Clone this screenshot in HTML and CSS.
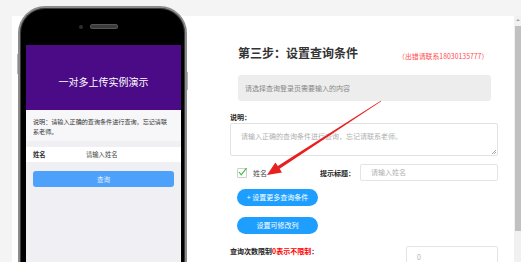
FILE: index.html
```html
<!DOCTYPE html>
<html lang="zh-CN">
<head>
    <meta charset="UTF-8">
    <meta name="viewport" content="width=device-width, initial-scale=1.0">
    <title>设置查询条件</title>
    <link rel="stylesheet" href="styles.css">
</head>
<body>
    <div class="page">
        <div class="panel">
            <div class="phone">
                <div class="phone-top">
                    <span class="camera"></span>
                    <span class="speaker"></span>
                </div>
                <div class="screen">
                    <div class="screen-head">一对多上传实例演示</div>
                    <div class="screen-desc">说明：请输入正确的查询条件进行查询，忘记请联系老师。</div>
                    <div class="screen-row">
                        <span class="screen-label">姓名</span>
                        <span class="screen-ph">请输入姓名</span>
                    </div>
                    <div class="screen-btn">查询</div>
                </div>
            </div>

            <div class="form">
                <div class="title-row">
                    <h2>第三步：设置查询条件</h2>
                    <span class="note">（出错请联系18030135777）</span>
                </div>
                <div class="tip">请选择查询登录页需要输入的内容</div>

                <div class="label">说明：</div>
                <div class="textarea">
                    请输入正确的查询条件进行查询，忘记请联系老师。
                    <span class="grip"></span>
                </div>

                <div class="check-row">
                    <span class="checkbox">
                        <svg width="11" height="10" viewBox="0 0 11 10"><polyline points="2,5 4.2,7.8 9.5,1.2" fill="none" stroke="#3dbb3d" stroke-width="1.1"/></svg>
                    </span>
                    <span class="check-text">姓名</span>
                    <span class="label hint">提示标题：</span>
                    <div class="input">请输入姓名</div>
                </div>

                <button class="btn">+ 设置更多查询条件</button>
                <button class="btn second">设置可修改列</button>

                <div class="limit-row">
                    <span class="label">查询次数限制<em>0表示不限制</em>：</span>
                    <div class="input small">0</div>
                </div>
            </div>
        </div>

        <div class="scrollbar">
            <span class="up"></span>
            <span class="thumb"></span>
        </div>

        <svg class="arrow" width="521" height="262" viewBox="0 0 521 262">
            <polygon fill="#e8201f" points="267,175 282,172.4 279.6,168.7 381.2,101.3 380.8,100.7 277.8,166.1 275.4,162.4"/>
        </svg>
    </div>
</body>
</html>
```

FILE: styles.css
```css
html, body {
    margin: 0;
    height: 262px;
    overflow: hidden;
}
body {
    font-family: "Noto Sans CJK SC", "Liberation Sans", sans-serif;
    background: #f4f4f4;
    color: #333;
}
.page {
    position: relative;
    display: flex;
    padding: 16px 0 0 12px;
    height: 246px;
    overflow: hidden;
}
.panel {
    display: flex;
    width: 491px;
    padding: 0 6px;
    background: #fff;
}

/* phone mockup */
.phone {
    position: relative;
    width: 155px;
    height: 270px;
    margin-top: -10px;
    padding: 0 4px 0 6px;
    border: 2px solid #8c8c8c;
    border-bottom: none;
    border-radius: 27px 27px 0 0;
    background: #000;
    box-shadow: inset 0 0 0 1px #3a3a3a;
}
.phone::before,
.phone::after {
    content: "";
    position: absolute;
    width: 1px;
    background: #b5b5b5;
}
.phone::before {
    left: -3px;
    top: 46px;
    height: 20px;
}
.phone::after {
    right: -3px;
    top: 64px;
    height: 18px;
}
.phone-top {
    height: 37px;
    display: flex;
    align-items: center;
    justify-content: center;
}
.camera {
    width: 4px;
    height: 4px;
    border-radius: 50%;
    background: #2c2c34;
    margin-right: 8px;
}
.speaker {
    width: 26px;
    height: 3px;
    border-radius: 2px;
    background: #3b3b3b;
    box-shadow: 0 0 0 1px #555;
    margin-right: 12px;
}
.screen {
    height: 240px;
    background: #efeff4;
}
.screen-head {
    height: 57px;
    padding-top: 8px;
    line-height: 57px;
    text-align: center;
    background: #4b0a86;
    color: #fff;
    font-size: 10px;
}
.screen-desc {
    padding: 7px 13px 4px 7px;
    margin-bottom: 6px;
    font-size: 6.1px;
    line-height: 10px;
    background: #f7f7f9;
}
.screen-row {
    display: flex;
    height: 15px;
    line-height: 15px;
    padding: 0 7px;
    background: #fff;
    font-size: 6.3px;
}
.screen-label {
    width: 53px;
    font-weight: bold;
}
.screen-ph {
    color: #444;
}
.screen-btn {
    margin: 9px 7px 0;
    height: 16px;
    line-height: 16px;
    border-radius: 3px;
    background: #4da1fb;
    color: #e6efff;
    text-align: center;
    font-size: 6.5px;
}

/* form */
.form {
    width: 268px;
    margin-left: 43px;
    padding-top: 29px;
    font-size: 7px;
}
.title-row {
    display: flex;
    align-items: flex-end;
    padding-left: 8px;
    height: 16px;
}
.title-row h2 {
    margin: 0;
    font-size: 12px;
    line-height: 16px;
    font-weight: bold;
    color: #333;
}
.note {
    margin-left: 40px;
    font-size: 6.9px;
    line-height: 9px;
    color: #ff4b4b;
}
.tip {
    margin: 14px 7px 0 8px;
    height: 26px;
    line-height: 26px;
    padding-left: 7px;
    border-radius: 3px;
    background: #ededed;
    color: #888;
}
.label {
    font-weight: bold;
    line-height: 10px;
    color: #222;
}
.form > .label {
    margin-top: 11px;
}
.textarea {
    position: relative;
    margin-top: 1px;
    height: 31px;
    padding: 0 10px;
    line-height: 24px;
    border: 1px solid #e2e2e2;
    border-radius: 2px;
    color: #b0b0b0;
}
.grip {
    position: absolute;
    right: 1px;
    bottom: 1px;
    width: 4px;
    height: 4px;
    background: linear-gradient(135deg, transparent 45%, #aaa 45%, #aaa 55%, transparent 55%, transparent 70%, #aaa 70%, #aaa 80%, transparent 80%);
}
.check-row {
    display: flex;
    align-items: center;
    margin-top: 8px;
    height: 17px;
}
.checkbox {
    position: relative;
    width: 8px;
    height: 8px;
    margin-left: 7px;
    border: 1px solid #cfcfcf;
    border-radius: 1px;
    background: #fff;
}
.checkbox svg {
    position: absolute;
    left: -1px;
    top: -2px;
}
.check-text {
    margin-left: 6px;
    color: #444;
}
.hint {
    margin-left: auto;
    margin-right: 5px;
}
.input {
    width: 126px;
    height: 15px;
    line-height: 15px;
    padding-left: 10px;
    border: 1px solid #e4e4e4;
    border-radius: 2px;
    color: #b0b0b0;
}
.btn {
    display: block;
    width: 81px;
    height: 17px;
    margin: 8px 0 0 7px;
    padding: 0;
    border: none;
    border-radius: 9px;
    background: #1e9fff;
    color: #fff;
    font-family: inherit;
    font-size: 7px;
    line-height: 17px;
}
.btn.second {
    margin-top: 11px;
}
.limit-row {
    display: flex;
    align-items: flex-start;
    margin-top: 12px;
}
.limit-row em {
    font-style: normal;
    color: #f00;
}
.input.small {
    width: 80px;
    height: 20px;
    line-height: 20px;
    margin-left: auto;
}

/* fake scrollbar */
.scrollbar {
    position: relative;
    width: 7px;
    background: #f1f1f1;
}
.up {
    position: absolute;
    left: 2px;
    top: 3px;
    border-left: 2px solid transparent;
    border-right: 2px solid transparent;
    border-bottom: 2px solid #a3a3a3;
}
.thumb {
    position: absolute;
    left: 1px;
    top: 10px;
    width: 6px;
    height: 205px;
    background: #c1c1c1;
}
.arrow {
    position: absolute;
    left: 0;
    top: 0;
    pointer-events: none;
}
```
